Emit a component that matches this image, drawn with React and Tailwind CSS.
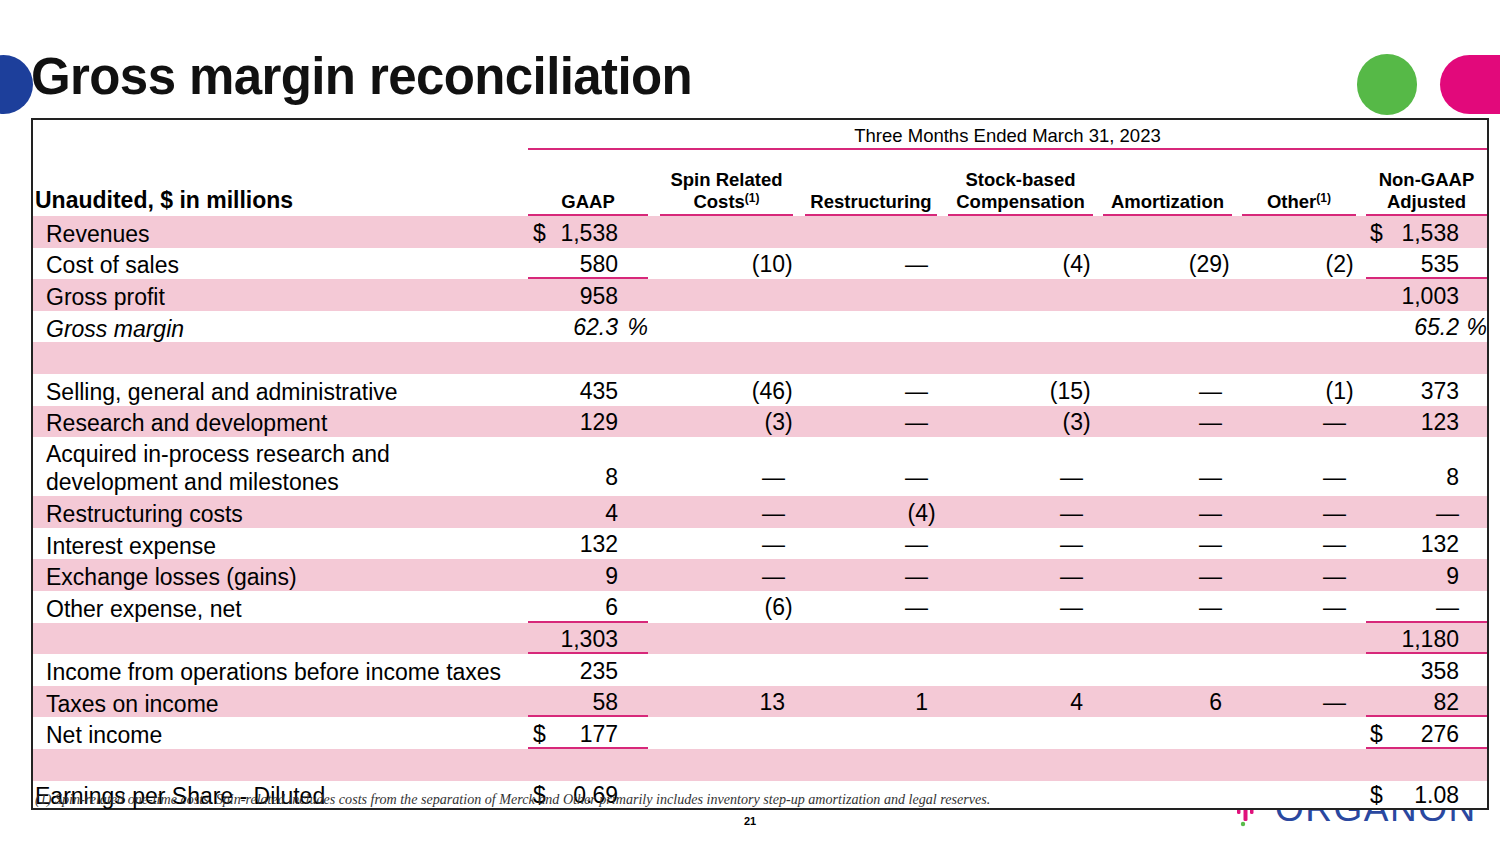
import React from "react";

const PINK = "bg-[#f4c9d6]";

const COLS = [
  { w: "w-[120px]", sfx: "w-[30px]", dpl: "pl-[5px]" },
  { w: "ml-[12px] w-[133px]", sfx: "w-[8px]", dpl: "" },
  { w: "ml-[12px] w-[132px]", sfx: "w-[9px]", dpl: "" },
  { w: "ml-[11px] w-[145px]", sfx: "w-[10px]", dpl: "" },
  { w: "ml-[10px] w-[129px]", sfx: "w-[10px]", dpl: "" },
  { w: "ml-[10px] w-[114px]", sfx: "w-[10px]", dpl: "" },
  { w: "ml-[10px] w-[121px]", sfx: "w-[28px]", dpl: "pl-[4px]" },
];

const D = "—";

const ROWS = [
  { label: "Revenues", pink: true, v: ["$1,538", null, null, null, null, null, "$1,538"] },
  { label: "Cost of sales", v: ["580", "(10)", D, "(4)", "(29)", "(2)", "535"], ul: true },
  { label: "Gross profit", pink: true, v: ["958", null, null, null, null, null, "1,003"] },
  { label: "Gross margin", italic: true, v: ["62.3 %", null, null, null, null, null, "65.2 %"] },
  { label: "", pink: true, v: [] },
  { label: "Selling, general and administrative", v: ["435", "(46)", D, "(15)", D, "(1)", "373"] },
  { label: "Research and development", pink: true, v: ["129", "(3)", D, "(3)", D, D, "123"] },
  { label: ["Acquired in-process research and", "development and milestones"], tall: true, v: ["8", D, D, D, D, D, "8"] },
  { label: "Restructuring costs", pink: true, v: ["4", D, "(4)", D, D, D, D] },
  { label: "Interest expense", v: ["132", D, D, D, D, D, "132"] },
  { label: "Exchange losses (gains)", pink: true, v: ["9", D, D, D, D, D, "9"] },
  { label: "Other expense, net", v: ["6", "(6)", D, D, D, D, D], ul: true },
  { label: "", pink: true, v: ["1,303", null, null, null, null, null, "1,180"], ul: true },
  { label: "Income from operations before income taxes", v: ["235", null, null, null, null, null, "358"] },
  { label: "Taxes on income", pink: true, v: ["58", "13", "1", "4", "6", D, "82"], ul: true },
  { label: "Net income", v: ["$177", null, null, null, null, null, "$276"], ul: true },
  { label: "", pink: true, v: [] },
];

function Cell({ v, col, ul, tall }) {
  let dollar = false;
  let main = "";
  let sfx = "";
  if (v) {
    let s = v;
    if (s.startsWith("$")) {
      dollar = true;
      s = s.slice(1);
    }
    if (s.endsWith(")")) {
      main = s.slice(0, -1);
      sfx = ")";
    } else if (s.endsWith("%")) {
      main = s.slice(0, -1).trim();
      sfx = "%";
    } else {
      main = s;
    }
  }
  return (
    <div
      className={`${col.w} self-stretch flex ${tall ? "items-end" : "items-center"} border-b-2 ${
        ul ? "border-[#d7287a]" : "border-transparent"
      }`}
    >
      {dollar && <span className={`${col.dpl}`}>$</span>}
      <span className="flex-1 text-right whitespace-nowrap">{main}</span>
      <span className={`${col.sfx} ${sfx === ")" ? "text-left" : "text-right"} whitespace-nowrap`}>{sfx}</span>
    </div>
  );
}

function Row({ r }) {
  return (
    <div
      className={`flex ${r.tall ? "h-[59px] items-end" : "h-[31.6px] items-center pt-[4px]"} ${r.pink ? PINK : ""} ${
        r.italic ? "italic" : ""
      }`}
    >
      <div className={`w-[495px] pl-[13px] leading-[28px]`}>
        {Array.isArray(r.label) ? r.label.map((l, i) => <div key={i}>{l}</div>) : r.label}
      </div>
      {COLS.map((c, i) => (
        <Cell key={i} v={r.v[i]} col={c} ul={r.ul && (i === 0 || i === 6)} tall={r.tall} />
      ))}
    </div>
  );
}

const HEADS = [
  ["GAAP"],
  ["Spin Related", "Costs", true],
  ["Restructuring"],
  ["Stock-based", "Compensation"],
  ["Amortization"],
  ["Other", null, true],
  ["Non-GAAP", "Adjusted"],
];

function Logo() {
  return (
    <div className="absolute left-[1236px] top-[787px] z-0 flex items-end">
      <svg width="20" height="40" viewBox="0 0 20 40" className="mr-[19px]">
        <rect x="1" y="20" width="3.5" height="7" rx="1.5" fill="#e0127c" />
        <rect x="7.5" y="20" width="4" height="14" rx="1.5" fill="#e0127c" />
        <rect x="14" y="20" width="3.5" height="7" rx="1.5" fill="#e0127c" />
        <circle cx="7" cy="37" r="2.2" fill="#5bbb4a" />
      </svg>
      <div className="text-[37px] leading-none text-[#2a48a0] tracking-[1.5px] font-['Liberation_Sans',Arial,sans-serif] font-normal">
        ORGANON
      </div>
    </div>
  );
}

export default function App() {
  return (
    <div className="relative w-[1500px] h-[844px] bg-white overflow-hidden font-['Liberation_Sans',Arial,sans-serif] text-black">
      <div className="absolute left-[-26px] top-[55px] w-[59px] h-[59px] rounded-full bg-[#1d3f9b]" />
      <div className="absolute left-[1357px] top-[54px] w-[60px] h-[61px] rounded-full bg-[#56b947]" />
      <div className="absolute left-[1440px] top-[55px] w-[120px] h-[59px] rounded-full bg-[#e2097b]" />
      <Logo />

      <div className="pt-[51px] pl-[31px]">
        <h1 className="h-[51px] text-[51px] leading-none font-bold tracking-[-0.6px] text-[#111]">
          Gross margin reconciliation
        </h1>
      </div>

      <div className="relative z-10 mt-[16px] ml-[31px] w-[1458px] border-2 border-[#222] bg-white text-[23px]">
        <div className="flex h-[30px]">
          <div className="w-[495px]" />
          <div className="flex-1 border-b-2 border-[#d7287a] flex items-center justify-center pt-[4px] text-[18.5px] leading-none">
            Three Months Ended March 31, 2023
          </div>
        </div>
        <div className="flex h-[66px] items-end">
          <div className="w-[495px] pl-[2px] pb-[2px] text-[23px] font-bold leading-[28px]">
            Unaudited, $ in millions
          </div>
          {HEADS.map((h, i) => (
            <div
              key={i}
              className={`${COLS[i].w} self-stretch flex flex-col justify-end items-center border-b-2 border-[#d7287a] pb-[1px] text-[18.5px] font-bold leading-[22px] text-center whitespace-nowrap`}
            >
              {h[1] ? (
                <>
                  <div>{h[0]}</div>
                  <div>
                    {h[1]}
                    {h[2] && <sup className="text-[12px] font-bold">(1)</sup>}
                  </div>
                </>
              ) : (
                <div>
                  {h[0]}
                  {h[2] && <sup className="text-[12px] font-bold">(1)</sup>}
                </div>
              )}
            </div>
          ))}
        </div>
        {ROWS.map((r, i) => (
          <Row key={i} r={r} />
        ))}
        <div className="flex h-[27px] items-center pt-[4px]">
          <div className="w-[495px] pl-[2px] leading-[28px]">Earnings per Share - Diluted</div>
          {COLS.map((c, i) => (
            <Cell key={i} v={i === 0 ? "$0.69" : i === 6 ? "$1.08" : null} col={c} />
          ))}
        </div>
        <div className="absolute left-[2px] top-[671px] text-[14.1px] leading-[16px] italic text-[#333] font-['Liberation_Serif','Times_New_Roman',serif] whitespace-nowrap">
          (1) Spin-related one-time costs. Spin-related includes costs from the separation of Merck and Other primarily includes inventory step-up amortization and legal reserves.
        </div>
      </div>

      <div className="mt-[5px] w-full text-center text-[11px] font-bold leading-[12px]">21</div>
    </div>
  );
}
